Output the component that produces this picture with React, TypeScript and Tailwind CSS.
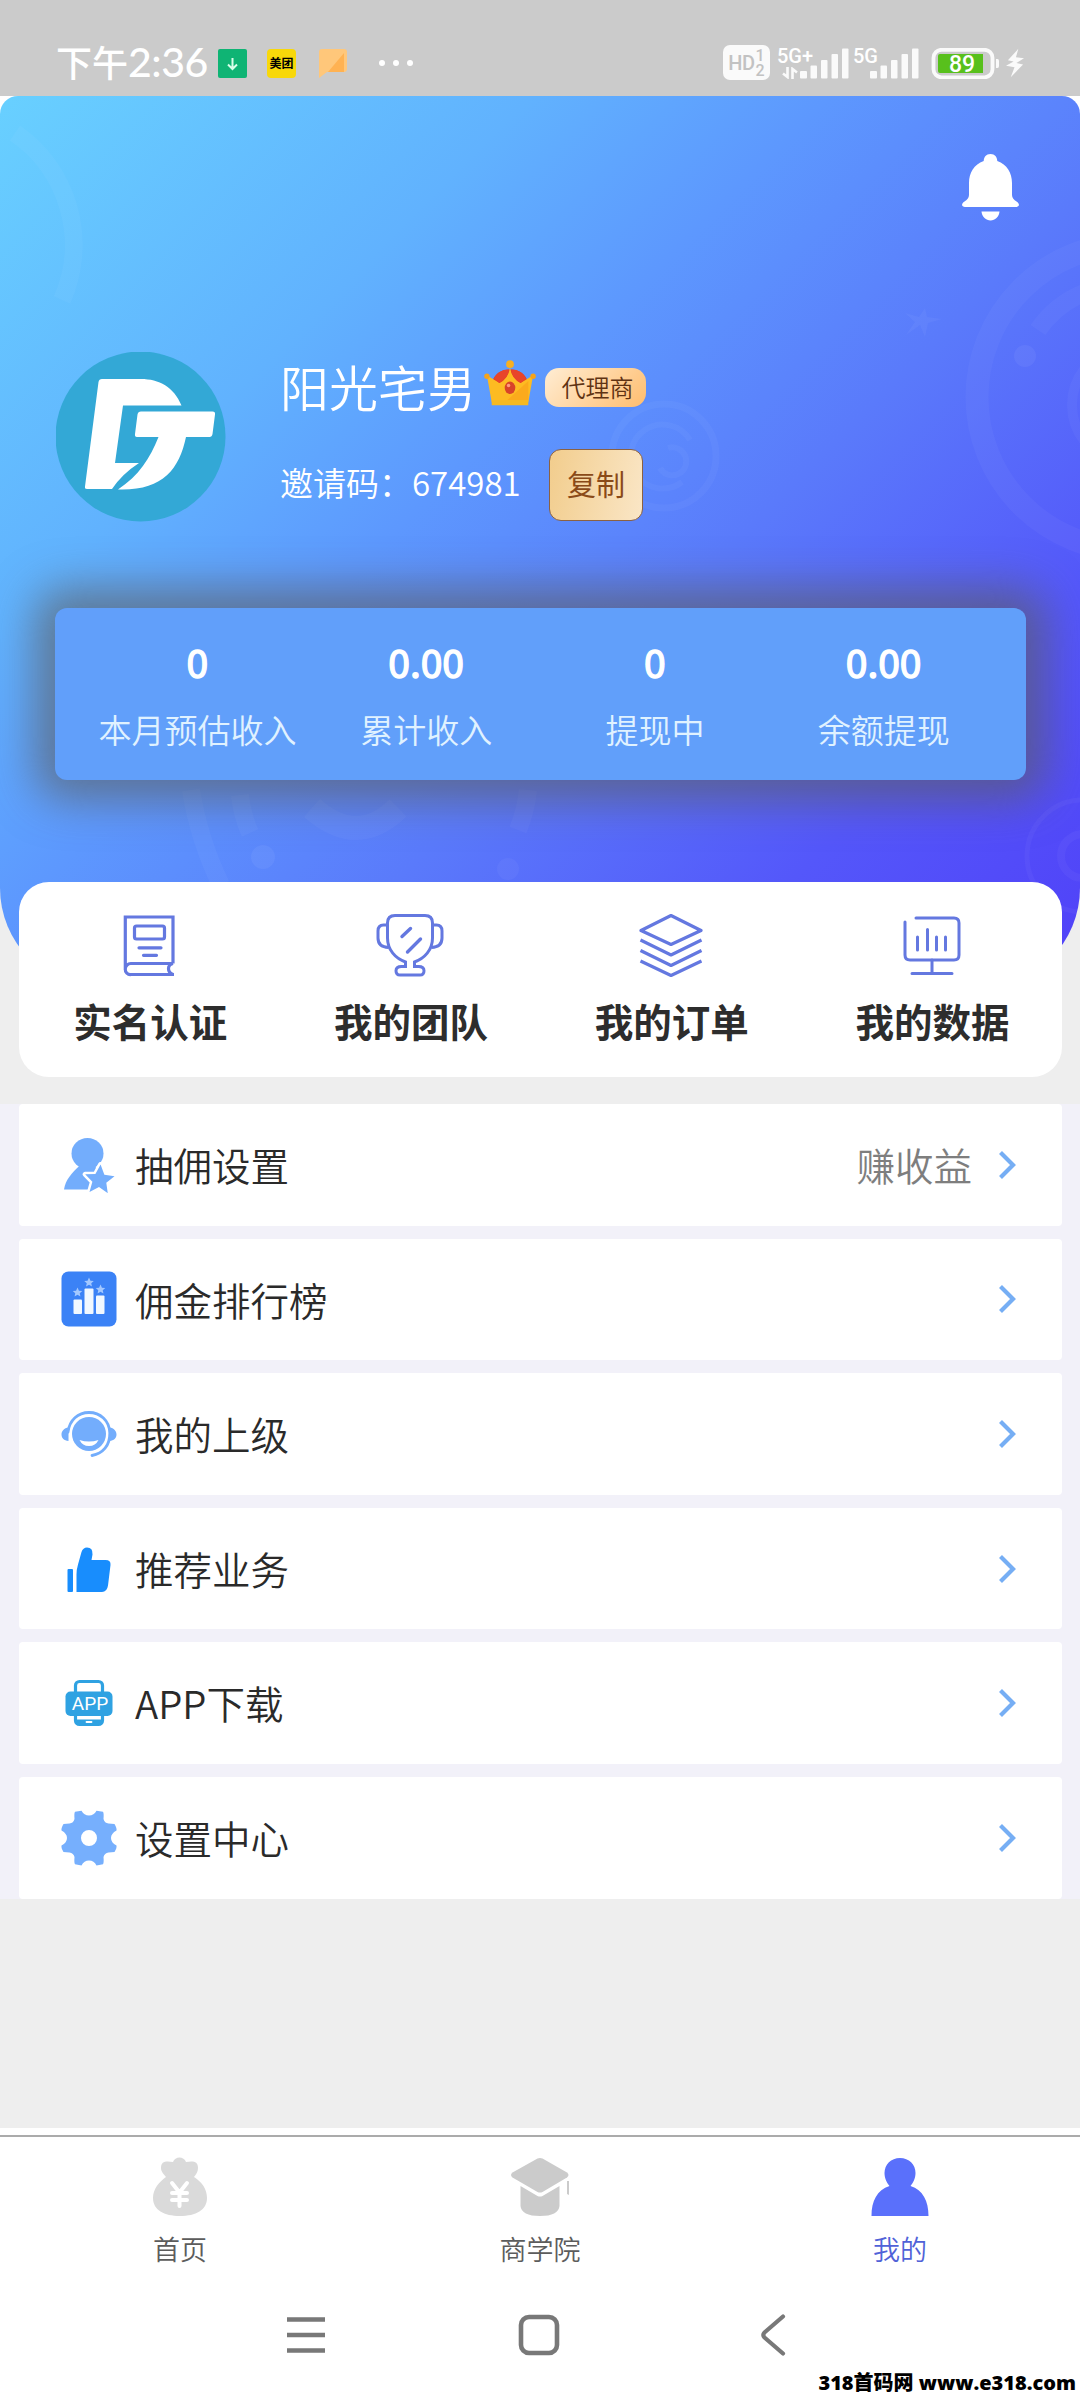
import type { ReactNode } from 'react';

interface Stat {
  value: string;
  label: string;
}

interface MenuItem {
  label: string;
  icon: ReactNode;
  extra?: string;
}

const starPoints = '0,-10 2.9,-3.6 9.5,-3.1 4.5,1.5 5.9,8.1 0,4.6 -5.9,8.1 -4.5,1.5 -9.5,-3.1 -2.9,-3.6';

const stats: Stat[] = [
  { value: '0', label: '本月预估收入' },
  { value: '0.00', label: '累计收入' },
  { value: '0', label: '提现中' },
  { value: '0.00', label: '余额提现' },
];

/* ---------- Shortcut icons ---------- */

function BookIcon() {
  return (
    <svg className="w-16 h-16" viewBox="0 0 64 64" fill="none" stroke="#6478e0" strokeWidth="3.2">
      <path d="M8.300 57V4H56V50.500M56 50.500H14a5.500 5.500 0 0 0-5.700 5.500 5 5 0 0 0 5.700 5.500H57M56 50.500c-6 1.500-6 8.500 0 11" />
      <rect x="17.500" y="13" width="30" height="13" rx="2" />
      <path d="M22 34.800h22M26.500 42.300h13" strokeLinecap="round" />
    </svg>
  );
}

function TrophyIcon() {
  return (
    <svg className="w-[70px] h-16" viewBox="0 0 70 64" fill="none" stroke="#6478e0" strokeWidth="3">
      <path d="M20 2.500h30q7.500 0 7.500 7.500v15c0 12-8 20.500-18 24v4.500h4q5.500 0 5.500 4.300t-4 4.300H25q-4 0-4-4.300t5.500-4.300h4V49c-10-3.500-18-12-18-24V10q0-7.500 7.500-7.500z" />
      <path d="M12.500 12H8.500Q3 12 3 18v7q0 9 10.500 9.500M57.500 12h4Q67 12 67 18v7q0 9-10.500 9.500" />
      <path d="M35.500 15.500l-8.500 8M45.500 26l-13 13" strokeLinecap="round" strokeWidth="3.400" />
    </svg>
  );
}

function LayersIcon() {
  return (
    <svg className="w-16 h-16" viewBox="0 0 64 64" fill="none" stroke="#6478e0" strokeWidth="3.200" strokeLinejoin="round">
      <path d="M32 2.500L62 17.500 32 31.500 2 17.500z" />
      <path d="M1.500 27L32 42l30.500-15M1.500 37.500L32 52.500l30.500-15M1.500 48L32 62.500 62.500 48" />
    </svg>
  );
}

function ChartBoardIcon() {
  return (
    <svg className="w-16 h-16" viewBox="0 0 64 64" fill="none" stroke="#6478e0" strokeWidth="3" strokeLinecap="round">
      <path d="M16 5h38q5 0 5 5v32q0 5-5 5H10q-5 0-5-5V9" />
      <path d="M32 47v13M12 60.500h40M17.500 24v13M27.500 16.500v20.500M36.500 24v13M45.500 24v13" />
    </svg>
  );
}

/* ---------- List icons ---------- */

function UserStarIcon() {
  return (
    <svg className="w-14 h-14" viewBox="0 0 56 56" fill="#73adfc">
      <ellipse cx="26.500" cy="16.500" rx="16" ry="15.500" />
      <path d="M3 52.500C4.500 43 10 36.500 19.500 28h14l13 24.500z" />
      <g transform="translate(38.500 43) rotate(4) scale(1.550)">
        <polygon points={starPoints} stroke="#fff" strokeWidth="3.200" strokeLinejoin="round" />
        <polygon points={starPoints} />
      </g>
    </svg>
  );
}

function RankIcon() {
  return (
    <svg className="w-14 h-14" viewBox="0 0 56 56">
      <rect x=".5" y=".5" width="55" height="55" rx="7" fill="#3b82f6" />
      <g fill="#f1f8ff">
        <rect x="12.500" y="28.500" width="8.500" height="14.500" rx="1" />
        <rect x="23.500" y="17.500" width="9" height="25.500" rx="1" />
        <rect x="35" y="24.500" width="8.500" height="18.500" rx="1" />
      </g>
      <g fill="#a3c8ff">
        <polygon points={starPoints} transform="translate(16.500 21.500) scale(.5)" />
        <polygon points={starPoints} transform="translate(28 11.500) scale(.5)" />
        <polygon points={starPoints} transform="translate(39.500 18.500) scale(.5)" />
      </g>
    </svg>
  );
}

function ServiceIcon() {
  return (
    <svg className="w-14 h-14" viewBox="0 0 56 56" fill="#73adfc">
      <circle cx="28" cy="28" r="17" />
      <path d="M7.500 21.500v13.500C3 34.500.5 32 .5 28.500s2.500-6.500 7-7zM48.500 21.500v13.500c4.500-.5 7-3 7-6.500s-2.500-6.500-7-7z" />
      <path d="M7 26C8.500 14 17 6.500 28 6.500S48.500 14.500 48.800 27C49 39.500 42 47.500 31 49.500" fill="none" stroke="#73adfc" strokeWidth="2.800" strokeLinecap="round" />
      <path d="M18.500 34q9.500 3 19 0-3 6-9.500 6t-9.500-6z" fill="#fff" />
    </svg>
  );
}

function ThumbIcon() {
  return (
    <svg className="w-14 h-14" viewBox="0 0 56 56" fill="#188dfd">
      <rect x="6.500" y="28" width="5.500" height="23" rx="1" />
      <path d="M15.500 51V33.500q0-5 1.500-10L20.500 11Q22 6.500 26 6.500q6 0 5.500 7L30.500 19h14q5.500 0 5 5L47 44.500q-1 6.500-6 6.500z" />
    </svg>
  );
}

function AppIcon() {
  return (
    <svg className="w-14 h-14" viewBox="0 0 56 56">
      <rect x="14.500" y="6.500" width="27" height="43" rx="4" fill="#fff" stroke="#2fa2e2" strokeWidth="3.200" />
      <path d="M14.500 44.500h27V46q0 3.500-4 3.500h-19q-4 0-4-3.500z" fill="#2fa2e2" />
      <path d="M25.500 47h5" stroke="#fff" strokeWidth="1.800" strokeLinecap="round" />
      <rect x="4.500" y="16.500" width="47" height="24.500" rx="5" fill="#2fa2e2" />
      <text x="29" y="35" textAnchor="middle" fill="#fff" className="font-['Roboto',sans-serif] text-[19px]">APP</text>
    </svg>
  );
}

function GearIcon() {
  return (
    <svg className="w-14 h-14" viewBox="0 0 56 56" fill="#76affd">
      <path
        fillRule="evenodd"
        d="M14 1.800L20.500.800Q23 5.500 28 5.500T35.500.800L42 1.800Q43 3 42.500 9 43.500 13 47.500 13.500L53.500 14Q56 18 55.500 20.500 50 23.500 50 28T55.500 35.500Q56 38 53.500 42L47.500 42.500Q43.500 43 42.500 47 43 53 42 54.200L35.500 55.500Q33 50.500 28 50.500T20.500 55.500L14 54.200Q13 53 13.500 47 12.500 43 8.500 42.500L2.500 42Q0 38 .500 35.500 6 32.500 6 28T.5 20.500Q0 18 2.500 14L8.500 13.500Q12.500 13 13.500 9 13 3 14 1.800zM28 20a8 8 0 1 0 0 16 8 8 0 0 0 0-16z"
      />
    </svg>
  );
}

const shortcuts: MenuItem[] = [
  { label: '实名认证', icon: <BookIcon /> },
  { label: '我的团队', icon: <TrophyIcon /> },
  { label: '我的订单', icon: <LayersIcon /> },
  { label: '我的数据', icon: <ChartBoardIcon /> },
];

const menuItems: MenuItem[] = [
  { label: '抽佣设置', icon: <UserStarIcon />, extra: '赚收益' },
  { label: '佣金排行榜', icon: <RankIcon /> },
  { label: '我的上级', icon: <ServiceIcon /> },
  { label: '推荐业务', icon: <ThumbIcon /> },
  { label: 'APP下载', icon: <AppIcon /> },
  { label: '设置中心', icon: <GearIcon /> },
];

/* ---------- Status bar ---------- */

function SignalBars() {
  return (
    <svg className="w-[50px] h-8" viewBox="0 0 50 32" fill="#fafafa">
      <rect x="0" y="24" width="7" height="7.500" rx="1" />
      <rect x="10.500" y="18.500" width="6.500" height="13" rx="1" />
      <rect x="21" y="13" width="6.500" height="18.500" rx="1" />
      <rect x="31.500" y="7" width="6.500" height="24.500" rx="1" />
      <rect x="42" y="1.500" width="6.500" height="30" rx="1" />
    </svg>
  );
}

function StatusBar() {
  return (
    <div className="h-24 bg-[#cbcbcb] flex items-start justify-between pl-14 pr-[56px] pt-[45px] text-white">
      <div className="flex items-center h-9">
        <span className="-mt-[3px] w-[152px] text-[36px] leading-9 whitespace-nowrap font-medium">
          下午<span className="font-['Lato',sans-serif] text-[41px] tracking-[-0.5px]">2:36</span>
        </span>
        <svg className="ml-[10px] w-[29px] h-[29px]" viewBox="0 0 29 29">
          <rect width="29" height="29" rx="2" fill="#0fb474" />
          <path d="M14.500 9v11M10 15.500l4.500 4.500 4.500-4.500" fill="none" stroke="#d8ffe9" strokeWidth="2" />
        </svg>
        <span className="ml-5 w-[29px] h-[29px] rounded-[4px] bg-[#f8d80a] text-black text-[12px] font-bold flex items-center justify-center whitespace-nowrap">
          美团
        </span>
        <svg className="ml-[23px] w-7 h-[30px]" viewBox="0 0 28 30">
          <path d="M3 1h22q3 0 3 3v17q0 3-3 3H8l-8 6V4q0-3 3-3z" fill="#ffc77a" />
          <path d="M25 5v19H9z" fill="#ffb252" />
        </svg>
        <svg className="ml-[31px] w-9 h-2" viewBox="0 0 36 8" fill="#fff">
          <circle cx="4" cy="4" r="3" />
          <circle cx="18" cy="4" r="3" />
          <circle cx="32" cy="4" r="3" />
        </svg>
      </div>

      <div className="flex items-start font-['Roboto',sans-serif] font-medium">
        <span className="w-[47px] h-[35px] rounded-[7px] bg-[#fafafa] text-[#c2c2c2] flex items-center justify-center gap-px">
          <span className="text-[20px] leading-none tracking-[-0.5px]">HD</span>
          <span className="flex flex-col text-[16px] leading-[15px]">
            <span>1</span>
            <span>2</span>
          </span>
        </span>
        <div className="relative ml-[30px] mt-[2px]">
          <span className="absolute -left-[23px] -top-px text-[20px] leading-none">5G+</span>
          <svg className="absolute -left-[18px] top-[20px] w-4 h-3" viewBox="0 0 16 12" fill="none" stroke="#fafafa" strokeWidth="2.600">
            <path d="M5.500 0v10L1 6.500M10.500 12V2L15 5.500" />
          </svg>
          <SignalBars />
        </div>
        <div className="relative ml-5 mt-[2px]">
          <span className="absolute -left-[17px] -top-px text-[20px] leading-none">5G</span>
          <SignalBars />
        </div>
        <svg className="ml-[10px] mt-[3px] w-[70px] h-[31px]" viewBox="0 0 70 31">
          <rect x="3.500" y="1.800" width="59" height="27.500" rx="8" fill="none" stroke="#fafafa" strokeWidth="3.800" />
          <path d="M10 6h43v19H10q-2 0-2-2V8q0-2 2-2z" fill="#58c01c" />
          <path d="M66 11h1.500q1.500 0 1.500 2v5q0 2-1.500 2H66z" fill="#fafafa" />
          <text x="32" y="23.500" textAnchor="middle" fill="#fff" className="font-['Roboto',sans-serif] text-[23px] font-medium">89</text>
        </svg>
        <svg className="ml-[6px] mt-[3px] w-[18px] h-[30px]" viewBox="0 0 19 30" fill="#fafafa">
          <path d="M13 0L2 12l6 1.500L0 18l9 1.500L5 30 18 16.500 11 15l8-5-8.500-1z" />
        </svg>
      </div>
    </div>
  );
}

/* ---------- Hero ---------- */

function HeroDecoration() {
  return (
    <svg className="absolute inset-0 -z-10 w-full h-full" viewBox="0 96 1080 892" fill="none" stroke="#fff" strokeOpacity=".035">
      <path d="M15 133A136 136 0 0 1 62 300" strokeWidth="18" />
      <circle cx="1130" cy="397" r="153" strokeWidth="23" />
      <path d="M1038 330q18-26 46-37" strokeWidth="18" />
      <circle cx="1025" cy="356" r="11" fill="#fff" fillOpacity=".05" stroke="none" />
      <circle cx="1130" cy="405" r="58" strokeWidth="10" />
      <path d="M906 335l14-10 5 12 3-14 14-4-15-2-2-9-6 9-14-4 10 9z" fill="#fff" fillOpacity=".04" stroke="none" />
      <circle cx="664" cy="456" r="52" strokeWidth="7" />
      <path d="M690 440a32 32 0 1 0-8 42M668 448a14 14 0 1 1-8 20" strokeWidth="6" />
      <path d="M191 790q8 50 30 95M240 795q2 20 10 38M528 790q-2 20-10 40" strokeWidth="18" />
      <path d="M312 808q45 40 86 0" strokeWidth="24" />
      <circle cx="263" cy="857" r="12" fill="#fff" fillOpacity=".05" stroke="none" />
      <circle cx="508" cy="869" r="11" fill="#fff" fillOpacity=".04" stroke="none" />
      <circle cx="1083" cy="856" r="56" strokeWidth="5" />
      <circle cx="1083" cy="856" r="22" strokeWidth="8" />
    </svg>
  );
}

function Avatar() {
  return (
    <svg className="w-[170px] h-[170px] shrink-0" viewBox="56 352 170 170">
      <circle cx="140.500" cy="436.500" r="85" fill="#33a8d6" />
      <path
        d="M102 379h39c18 0 33 8 40.500 26.500H123L115 463h24q-17 11-27 26H87q-2.500 0-2-2.500L98.500 382q.500-3 3.500-3z"
        fill="#fff"
      />
      <path d="M141 411.500h71.500q3 0 2.500 3L212.500 434q-.500 3-3 3H186c-7 33-24 54-68 52.500 21-14 32-31 40.500-52.500h-21.500q-2.500 0-2-3l2.500-19.500q.500-3 3.500-3z" fill="#fff" />
    </svg>
  );
}

function Crown() {
  return (
    <svg className="w-[52px] h-12" viewBox="0 0 54 48">
      <path d="M8 24Q12 10 27 10t19 14l-5 12H13z" fill="#e33e26" />
      <path d="M3 16l13 8Q25 20 27 8q2 12 11 16l13-8-5 28H8z" fill="#fdbb22" />
      <path d="M10 19Q17 9 26 10q-1 9-10 14zM44 19Q37 9 28 10q1 9 10 14z" fill="#e8452a" />
      <path d="M46 22l-22 20h22z" fill="#fbaa1c" />
      <path d="M8 42h38v5H8z" fill="#f5b922" />
      <circle cx="27" cy="4.500" r="4" fill="#f9b021" />
      <circle cx="3" cy="17" r="2.800" fill="#f5a31a" />
      <circle cx="51" cy="17" r="2.800" fill="#f5a31a" />
      <ellipse cx="27" cy="29" rx="5.500" ry="6.500" fill="#d8432a" />
      <circle cx="25.500" cy="26.500" r="1.800" fill="#ff9a80" />
    </svg>
  );
}

function Hero() {
  return (
    <div className="bg-[linear-gradient(#fff_40px,#eeeeee_40px)]">
      <div className="relative isolate overflow-hidden h-[892px] rounded-t-[18px] rounded-b-[100px] bg-[linear-gradient(135deg,#68d0ff_0%,#61b2fe_27%,#5d98fe_42%,#5a7afb_60%,#5457fa_80%,#5040f8_100%)]">
        <HeroDecoration />

        <div className="flex justify-end pt-[58px] pr-[61px]">
          <svg className="w-[57px] h-[67px]" viewBox="0 0 57 67" fill="#fff">
            <path d="M28.500 0c4.500 0 6.500 3 6.800 7C45 10.500 50 19 50 29v12c0 3 2 5 4.500 6.500 4 2.500 2.500 5.500-.5 5.500H3c-3 0-4.500-3-.5-5.500C5 46 7 44 7 41V29C7 19 12 10.500 21.700 7c.3-4 2.300-7 6.800-7z" />
            <path d="M19.500 57.500h18C37 63 33 66.500 28.500 66.500S20 63 19.500 57.500z" />
          </svg>
        </div>

        <div className="flex mt-[131px] pl-14">
          <Avatar />
          <div className="ml-[54px] text-white font-[350]">
            <div className="flex items-center h-[70px]">
              <span className="w-[204px] text-[49px] leading-[66px] pb-[2px] whitespace-nowrap">阳光宅男</span>
              <span className="-mt-[8px]">
                <Crown />
              </span>
              <span className="ml-[9px] w-[101px] h-[39px] rounded-[14px] bg-[linear-gradient(135deg,#ffedd4,#ffbd6e)] text-[#5f3313] text-[24px] leading-none flex items-center justify-center pl-1">
                代理商
              </span>
            </div>
            <div className="flex items-center mt-[27px]">
              <span className="w-[269px] pb-[5px] text-[33px] leading-none whitespace-nowrap">邀请码：674981</span>
              <button className="w-[94px] h-[72px] rounded-[12px] border border-[#8b6142] bg-[linear-gradient(100deg,#f2cd8d,#fae6c6)] text-[#8a4a18] text-[29px] font-normal leading-none whitespace-nowrap pb-1">
                复制
              </button>
            </div>
          </div>
        </div>

        {/* Income summary */}
        <div className="ml-[55px] mr-[54px] mt-[86px] h-[172px] rounded-[12px] bg-[#619ffa] px-7 grid grid-cols-4 shadow-[0_0_44px_20px_rgba(92,92,92,0.64)]">
          {stats.map((stat) => (
            <div key={stat.label} className="flex flex-col items-center text-white pt-[33px]">
              <span className="text-[39px] leading-10 [-webkit-text-stroke:1.4px_#fff]">{stat.value}</span>
              <span className="mt-[32px] text-[33px] leading-8 whitespace-nowrap font-[350] text-[#e0f2ff]">{stat.label}</span>
            </div>
          ))}
        </div>
      </div>
    </div>
  );
}

/* ---------- Bottom ---------- */

function TabBar() {
  return (
    <div className="mt-[7px] border-t-2 border-[#ababab] grid grid-cols-3 h-[148px] pt-5 text-[27px] leading-[30px] font-[350] text-[#5c5c5c]">
      <div className="flex flex-col items-center gap-[17px]">
        <svg className="w-[60px] h-[60px]" viewBox="0 0 60 60" fill="#dadada">
          <path d="M11 11c0-7 5-7 12-6 2-6 11-6 13 0 7-1 12-1 12 6 0 4-2 6-4 9 8 5 13 12 13 21 0 12-11 18-27 18S3 53 3 41c0-9 6-16 13-21-2-3-5-5-5-9z" />
          <path d="M22 26l7.500 9.500L37 26M29.500 35v14M22 36h15M22 43h15" fill="none" stroke="#fff" strokeWidth="4" strokeLinecap="round" />
        </svg>
        <span>首页</span>
      </div>
      <div className="flex flex-col items-center gap-[17px]">
        <svg className="w-[60px] h-[60px]" viewBox="0 0 60 60" fill="#cbcbcb">
          <path d="M27.500 1.500q2.500-1 5 0L57 15.500q3 2.500 0 5L32.500 35q-2.500 1-5 0L2.500 20.500q-3-2.500 0-5z" />
          <path d="M10.500 29l17 10q2.500 1.200 5 0l17-10v20q-1 10-19.500 10T10.500 49z" />
          <path d="M57 24h2v14l-2-1z" />
        </svg>
        <span>商学院</span>
      </div>
      <div className="flex flex-col items-center gap-[17px] text-[#5062d8]">
        <svg className="w-[60px] h-[60px]" viewBox="0 0 60 60" fill="#5a70fb">
          <path d="M30 1c9 0 15.500 6.500 15.500 15 0 5.500-2.500 10-5 13C53 33 58.500 44 58.500 59h-57C1.500 44 7 33 19.500 29c-2.500-3-5-7.500-5-13C14.500 7.500 21 1 30 1z" />
        </svg>
        <span>我的</span>
      </div>
    </div>
  );
}

function SystemNav() {
  return (
    <div className="flex items-center h-[104px] pl-[287px] text-[#787878]">
      <svg className="w-[38px] h-[42px]" viewBox="0 0 38 42" stroke="currentColor" strokeWidth="4.600">
        <path d="M0 5.500h38M0 21h38M0 36.500h38" />
      </svg>
      <svg className="ml-[193px] w-[42px] h-[42px]" viewBox="0 0 42 42" fill="none" stroke="currentColor" strokeWidth="4.600">
        <rect x="3" y="3" width="36" height="36" rx="8" />
      </svg>
      <svg className="ml-[200px] w-[26px] h-[42px]" viewBox="0 0 26 42" fill="none" stroke="currentColor" strokeWidth="4.200" strokeLinecap="round">
        <path d="M23 2.500L4.500 18.500q-2.500 2.500 0 5L23 39.500" />
      </svg>
    </div>
  );
}

export default function App() {
  return (
    <div className="relative w-[1080px] h-[2400px] overflow-hidden bg-[#eeeeee] flex flex-col font-['Noto_Sans_CJK_SC',sans-serif]">
      <StatusBar />
      <Hero />

      {/* Shortcuts */}
      <div className="relative -mt-[106px] ml-[19px] mr-[18px] h-[195px] rounded-[30px] bg-white grid grid-cols-4 pt-[31px]">
        {shortcuts.map((item) => (
          <div key={item.label} className="flex flex-col items-center">
            {item.icon}
            <span className="mt-[23px] pl-[2px] text-[38.500px] leading-10 font-bold text-[#2d2d2d]">{item.label}</span>
          </div>
        ))}
      </div>

      {/* Menu list */}
      <div className="mt-[27px] pl-[19px] pr-[18px] bg-[#f2f1f9] flex flex-col gap-[13px]">
        {menuItems.map((item) => (
          <div key={item.label} className="h-[121.600px] rounded-[4px] bg-white flex items-center pl-[42px] pr-11">
            {item.icon}
            <span className="ml-[18px] pb-px flex-1 text-[38.500px] leading-none font-[350] text-[#2a2a2a]">{item.label}</span>
            {item.extra && (
              <span className="mr-[26px] pb-px text-[38.500px] leading-none font-[350] text-[#7e7e7e]">{item.extra}</span>
            )}
            <svg className="w-5 h-8" viewBox="0 0 20 32" fill="none" stroke="#76aef4" strokeWidth="4.200">
              <path d="M2.500 3.500l12.500 12.500L2.500 28.500" />
            </svg>
          </div>
        ))}
      </div>

      <div className="mt-auto bg-white">
        <TabBar />
        <SystemNav />
        <div className="h-[13px]" />
      </div>

      <span className="absolute right-[4px] bottom-[5px] text-[20px] leading-6 font-black text-black whitespace-nowrap font-['Open_Sans','Noto_Sans_CJK_SC',sans-serif]">
        318首码网 www.e318.com
      </span>
    </div>
  );
}
